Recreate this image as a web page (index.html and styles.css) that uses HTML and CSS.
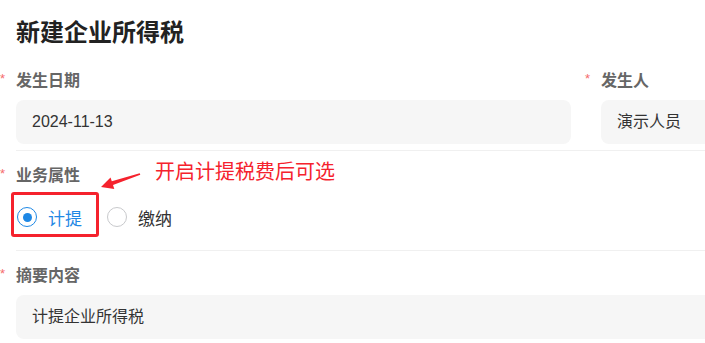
FILE: index.html
```html
<!DOCTYPE html>
<html>
<head>
    <title>新建企业所得税</title>
    <link rel="stylesheet" href="styles.css">
</head>
<body>
    <div id="page">
        <div id="title">新建企业所得税</div>
        <div class="form-row two-cols">
            <div class="form-item">
                <label class="req">发生日期</label>
                <div class="field">2024-11-13</div>
            </div>
            <div class="form-item">
                <label class="req">发生人</label>
                <div class="field">演示人员</div>
            </div>
        </div>
        <div class="form-row annotated">
            <div class="form-item">
                <label class="req">业务属性</label>
                <div class="radio-group">
                    <div class="radio checked"><span class="dot"></span>计提</div>
                    <div class="radio"><span class="dot"></span>缴纳</div>
                </div>
            </div>
            <div class="note-box"></div>
            <svg class="note-arrow" width="50" height="28" viewBox="0 0 50 28">
                <polygon points="6,21 19.3,22.9 18,19.1 45.3,8.8 44.7,7.2 16.8,15.3 15.5,11.5" fill="#f5222d"/>
            </svg>
            <div class="note-text">开启计提税费后可选</div>
        </div>
        <div class="form-row">
            <div class="form-item">
                <label class="req">摘要内容</label>
                <div class="field">计提企业所得税</div>
            </div>
        </div>
    </div>
</body>
</html>
```

FILE: styles.css
```css
body {
    margin: 0;
    padding: 0;
    background: #fff;
    color: #333;
    font-family: "Liberation Sans", "Noto Sans CJK SC", sans-serif;
    overflow: hidden;
}
#page {
    width: 1140px;
    padding: 16px 0 0 16px;
}
#title {
    font-size: 24px;
    font-weight: bold;
    line-height: 33px;
    color: #222;
    margin-bottom: 7px;
}
.form-row {
    padding: 14px 0 6px;
    border-bottom: 1px solid #f0f0f0;
}
.form-row:last-child {
    border-bottom: none;
}
.two-cols {
    display: grid;
    grid-template-columns: 555px 555px;
    column-gap: 30px;
}
.form-item {
    display: flex;
    flex-direction: column;
    gap: 8px;
}
label {
    font-size: 16px;
    line-height: 22px;
    font-weight: bold;
    color: #666;
}
label.req::before {
    content: "*";
    display: inline-block;
    width: 16px;
    margin-left: -16px;
    color: #f56c6c;
    font-size: 13px;
    font-weight: normal;
    vertical-align: top;
    line-height: 18px;
}
.field {
    height: 44px;
    line-height: 44px;
    padding-left: 16px;
    background: #f6f6f6;
    border-radius: 8px;
    font-size: 16px;
    color: #333;
}
.radio-group {
    display: flex;
    align-items: center;
    gap: 25px;
    height: 44px;
    margin-bottom: 5px;
    padding-left: 1px;
}
.radio {
    display: flex;
    align-items: center;
    gap: 11px;
    font-size: 17px;
    color: #333;
}
.radio .dot {
    flex: none;
    box-sizing: border-box;
    width: 20px;
    height: 20px;
    border: 1.5px solid #c8c9cc;
    border-radius: 50%;
    display: flex;
    align-items: center;
    justify-content: center;
}
.radio.checked {
    color: #1e88e5;
}
.radio.checked .dot {
    border-color: #1e88e5;
}
.radio.checked .dot::after {
    content: "";
    width: 9px;
    height: 9px;
    border-radius: 50%;
    background: #1e88e5;
}
.annotated {
    position: relative;
}
.note-box {
    position: absolute;
    left: -5px;
    top: 41px;
    width: 82px;
    height: 39px;
    border: 3px solid #f5222d;
    border-radius: 3px;
}
.note-arrow {
    position: absolute;
    left: 79px;
    top: 15px;
}
.note-text {
    position: absolute;
    left: 139px;
    top: 9px;
    font-size: 20px;
    line-height: 24px;
    color: #f5222d;
}
```
